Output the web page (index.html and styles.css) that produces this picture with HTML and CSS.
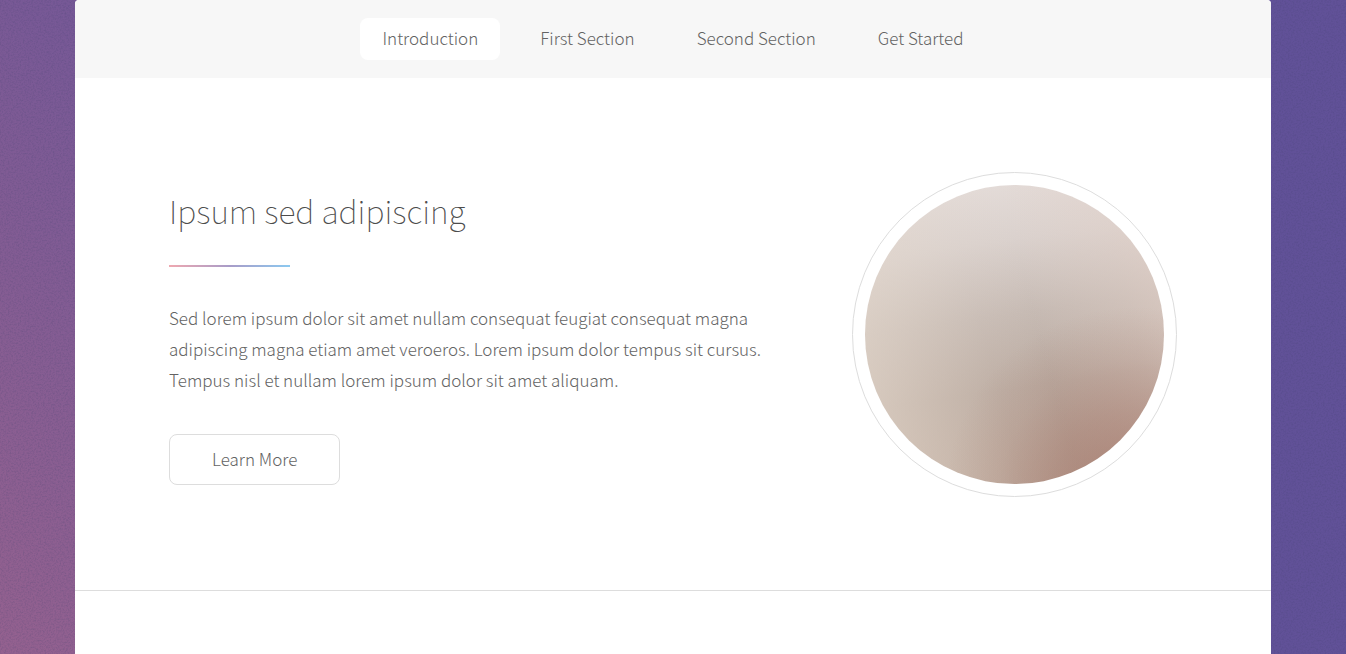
FILE: index.html
```html
<!DOCTYPE html>
<html lang="en">
<head>
<meta charset="utf-8">
<meta name="viewport" content="width=device-width, initial-scale=1">
<title>Introduction</title>
<link rel="stylesheet" href="styles.css">
</head>
<body>
<div class="wrapper">
  <nav class="nav" aria-label="Sections">
    <ul class="nav-list">
      <li><a class="nav-link active" href="#intro">Introduction</a></li>
      <li><a class="nav-link" href="#first">First Section</a></li>
      <li><a class="nav-link" href="#second">Second Section</a></li>
      <li><a class="nav-link" href="#cta">Get Started</a></li>
    </ul>
  </nav>
  <main>
    <section class="spotlight" id="intro">
      <div class="content">
        <h2 class="title">Ipsum sed adipiscing</h2>
        <p class="text">Sed lorem ipsum dolor sit amet nullam consequat feugiat consequat magna adipiscing magna etiam amet veroeros. Lorem ipsum dolor tempus sit cursus. Tempus nisl et nullam lorem ipsum dolor sit amet aliquam.</p>
        <a class="button" href="#first">Learn More</a>
      </div>
      <div class="frame"><div class="picture"></div></div>
    </section>
    <section class="next" id="first"></section>
  </main>
</div>
</body>
</html>
```

FILE: styles.css
```css
* {
  box-sizing: border-box;
}

body {
  margin: 0;
  min-height: 100vh;
  display: flex;
  justify-content: center;
  background-color: #5f5194;
  background-image:
    url("data:image/svg+xml,%3Csvg xmlns='http://www.w3.org/2000/svg' width='256' height='256'%3E%3Cfilter id='n'%3E%3CfeTurbulence type='fractalNoise' baseFrequency='.6' numOctaves='2' stitchTiles='stitch'/%3E%3CfeColorMatrix values='0 0 0 0 .05 0 0 0 0 .05 0 0 0 0 .15 .5 0 0 0 -.2'/%3E%3C/filter%3E%3Crect width='256' height='256' filter='url(%23n)'/%3E%3C/svg%3E"),
    linear-gradient(45deg, #94618f 0, #795996 462px, #615198 880px);
  color: #636363;
  font-family: "Noto Sans CJK JP", "Open Sans", sans-serif;
  font-size: 17px;
  font-weight: 300;
  line-height: 31px;
}

.wrapper {
  width: 100%;
  max-width: 1196px;
  background: #fff;
  border-radius: 4px 4px 0 0;
  overflow: hidden;
}

.nav {
  padding: 18px;
  background: #f7f7f7;
}

.nav-list {
  display: flex;
  flex-wrap: wrap;
  justify-content: center;
  gap: 18px;
  margin: 0;
  padding: 0;
  list-style: none;
}

.nav-link {
  display: block;
  padding: 0 22px 2px;
  border-radius: 8px;
  line-height: 40px;
  color: inherit;
  text-decoration: none;
}

.nav-link.active {
  background: #fff;
}

.spotlight {
  display: flex;
  align-items: center;
  gap: 56px;
  padding: 94px 94px 93px;
}

.content {
  flex: 1;
}

.title {
  margin: 0 0 35px;
  color: #4c4c4c;
  font-size: 32px;
  font-weight: 100;
  line-height: 52px;
}

.title::after {
  content: "";
  display: block;
  width: 121px;
  height: 2px;
  margin-top: 29px;
  background: linear-gradient(90deg, #efa8b0, #a89cc8 50%, #8cc9f0);
}

.text {
  margin: 0 0 39px;
}

.button {
  display: inline-block;
  vertical-align: top;
  padding: 0 42px 2px;
  border: 1px solid #ddd;
  border-radius: 8px;
  line-height: 47px;
  color: inherit;
  text-decoration: none;
}

.frame {
  flex: none;
  width: 325px;
  padding: 12px;
  border: 1px solid #ddd;
  border-radius: 50%;
}

.picture {
  aspect-ratio: 1;
  border-radius: 50%;
  background:
    radial-gradient(circle at 90% 104%, rgba(163, 115, 102, 0.75) 0, rgba(163, 115, 102, 0.42) 20%, rgba(163, 115, 102, 0.15) 33%, rgba(163, 115, 102, 0) 46%),
    linear-gradient(75deg, rgba(230, 218, 206, 0.75) 0, rgba(230, 218, 206, 0.45) 20%, rgba(230, 218, 206, 0.12) 42%, rgba(230, 218, 206, 0) 58%),
    linear-gradient(255deg, rgba(228, 210, 202, 0.7) 0, rgba(228, 210, 202, 0.35) 18%, rgba(228, 210, 202, 0) 44%),
    linear-gradient(172deg, #e6dedb 0, #dad1cd 22%, #c6bab3 44%, #b9a99f 66%, #b8a396 100%);
}

.next {
  border-top: 1px solid #ddd;
}
```
